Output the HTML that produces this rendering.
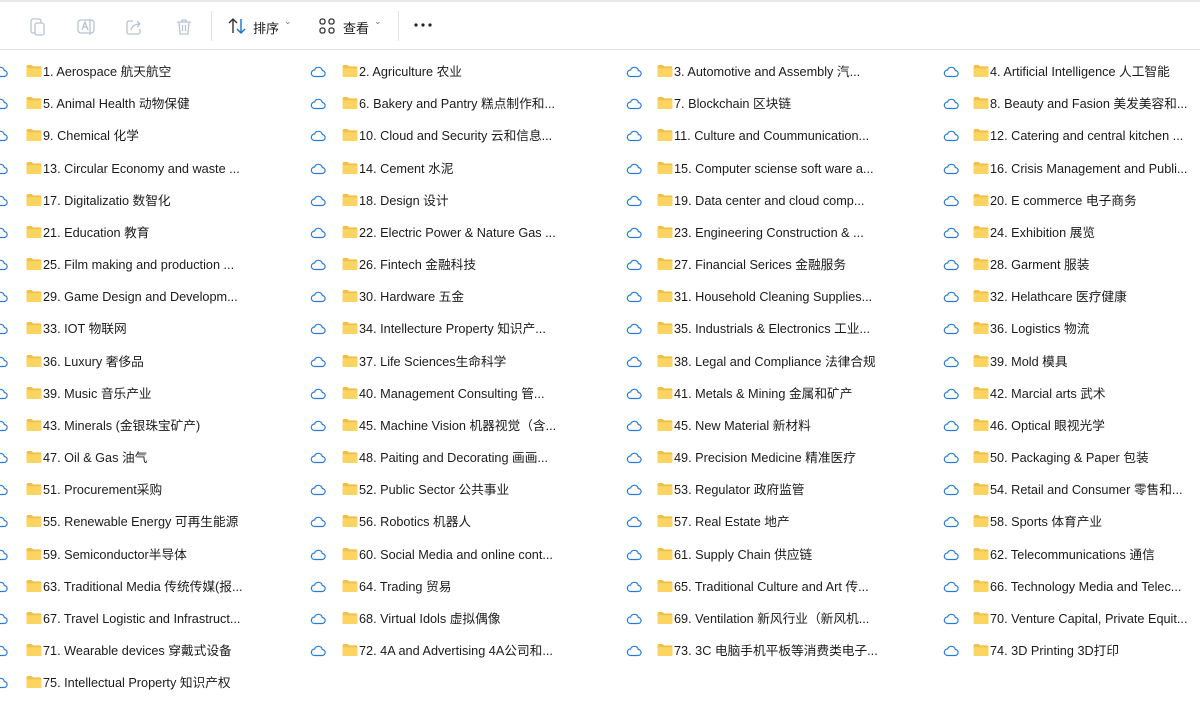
<!DOCTYPE html>
<html><head><meta charset="utf-8"><style>
body{margin:0;width:1200px;height:702px;background:#fff;overflow:hidden;position:relative;font-family:"Liberation Sans","Noto Sans CJK SC",sans-serif;color:#1b1b1b}
.tb{position:absolute;left:0;top:0;width:1200px;height:47px;border-top:2px solid #e8e8e8;border-bottom:1px solid #e0e0e0;background:#fff}
.ic{position:absolute}
.it{position:absolute;height:20px;font-size:12.7px;line-height:20px;white-space:nowrap}
.fo{position:absolute;width:16px;height:12px}
.cl{position:absolute}
.t{position:absolute;font-size:13px}
</style></head><body>
<div class="tb">
<svg class="ic" style="left:28px;top:14px" width="20" height="22" viewBox="0 0 20 22" fill="none" stroke="#b9c3cf" stroke-width="1.3"><rect x="3" y="3" width="10" height="14" rx="2"/><rect x="7" y="7" width="9" height="12" rx="2" fill="#fff"/></svg>
<svg class="ic" style="left:76px;top:15px" width="20" height="20" viewBox="0 0 20 20" fill="none" stroke="#b9c3cf" stroke-width="1.3"><rect x="2" y="3" width="16" height="13" rx="3"/><path d="M6 13l3-8 3 8M7 10h4M14 2v16"/></svg>
<svg class="ic" style="left:124px;top:15px" width="20" height="20" viewBox="0 0 20 20" fill="none" stroke="#b9c3cf" stroke-width="1.3"><path d="M9 4H5a2 2 0 0 0-2 2v9a2 2 0 0 0 2 2h9a2 2 0 0 0 2-2v-3"/><path d="M7 13c1-4 4-6 9-6M13 4l3 3-3 3"/></svg>
<svg class="ic" style="left:174px;top:15px" width="20" height="20" viewBox="0 0 20 20" fill="none" stroke="#b9c3cf" stroke-width="1.3"><path d="M3 5h14M8 5V3h4v2M5 5l1 12h8l1-12M8.5 8v6M11.5 8v6"/></svg>
<div style="position:absolute;left:211px;top:9px;width:1px;height:30px;background:#e3e3e3"></div>
<svg class="ic" style="left:227px;top:15px" width="20" height="18" viewBox="0 0 20 18" fill="none" stroke-width="1.4"><path d="M6 16V2M2 6l4-4 4 4" stroke="#333"/><path d="M14 2v14M10 12l4 4 4-4" stroke="#1a73c8"/></svg>
<div class="t" style="left:253px;top:16px">排序</div>
<div class="t" style="left:284px;top:14px;font-size:9px;color:#777">⌄</div>
<svg class="ic" style="left:319px;top:16px" width="16" height="16" viewBox="0 0 16 16" fill="none" stroke="#333" stroke-width="1.3"><rect x="1" y="1" width="5" height="5" rx="2"/><rect x="10" y="1" width="5" height="5" rx="2"/><rect x="1" y="10" width="5" height="5" rx="2"/><rect x="10" y="10" width="5" height="5" rx="2"/></svg>
<div class="t" style="left:343px;top:16px">查看</div>
<div class="t" style="left:374px;top:14px;font-size:9px;color:#777">⌄</div>
<div style="position:absolute;left:398px;top:9px;width:1px;height:30px;background:#e3e3e3"></div>
<svg class="ic" style="left:414px;top:21px" width="18" height="4" viewBox="0 0 18 4" fill="#222"><circle cx="2" cy="2" r="1.6"/><circle cx="9" cy="2" r="1.6"/><circle cx="16" cy="2" r="1.6"/></svg>
</div>
<div id="list"></div>
<script>
const items=["1. Aerospace 航天航空","2. Agriculture 农业","3. Automotive and Assembly 汽...","4. Artificial Intelligence 人工智能",
"5. Animal Health 动物保健","6. Bakery and Pantry 糕点制作和...","7. Blockchain 区块链","8. Beauty and Fasion 美发美容和...",
"9. Chemical 化学","10. Cloud and Security 云和信息...","11. Culture and Coummunication...","12. Catering and central kitchen ...",
"13. Circular Economy and waste ...","14. Cement 水泥","15. Computer sciense soft ware a...","16. Crisis Management and Publi...",
"17. Digitalizatio 数智化","18. Design 设计","19. Data center and cloud comp...","20. E commerce 电子商务",
"21. Education 教育","22. Electric Power & Nature Gas ...","23. Engineering Construction & ...","24. Exhibition 展览",
"25. Film making and production ...","26. Fintech 金融科技","27. Financial Serices 金融服务","28. Garment 服装",
"29. Game Design and Developm...","30. Hardware 五金","31. Household Cleaning Supplies...","32. Helathcare 医疗健康",
"33. IOT 物联网","34. Intellecture Property  知识产...","35. Industrials & Electronics 工业...","36. Logistics 物流",
"36. Luxury 奢侈品","37. Life Sciences生命科学","38. Legal and Compliance 法律合规","39. Mold 模具",
"39. Music 音乐产业","40. Management Consulting 管...","41. Metals & Mining 金属和矿产","42. Marcial arts 武术",
"43. Minerals (金银珠宝矿产)","45. Machine Vision 机器视觉（含...","45. New Material 新材料","46. Optical 眼视光学",
"47. Oil & Gas 油气","48. Paiting and Decorating 画画...","49. Precision Medicine 精准医疗","50. Packaging & Paper 包装",
"51. Procurement采购","52. Public Sector 公共事业","53. Regulator 政府监管","54. Retail  and Consumer 零售和...",
"55. Renewable Energy 可再生能源","56. Robotics 机器人","57. Real Estate 地产","58. Sports 体育产业",
"59. Semiconductor半导体","60. Social Media and online cont...","61. Supply Chain 供应链","62. Telecommunications 通信",
"63. Traditional Media 传统传媒(报...","64. Trading 贸易","65. Traditional Culture and Art 传...","66. Technology Media and Telec...",
"67. Travel Logistic and Infrastruct...","68. Virtual Idols 虚拟偶像","69. Ventilation 新风行业（新风机...","70. Venture Capital, Private Equit...",
"71. Wearable devices 穿戴式设备","72. 4A and Advertising 4A公司和...","73. 3C 电脑手机平板等消费类电子...","74. 3D Printing 3D打印",
"75. Intellectual Property 知识产权"];
const cx=[-8,310,626,943],fx=[26,342,657,973];
let h="";
items.forEach((s,i)=>{const c=i%4,r=Math.floor(i/4);const y=72+r*32.17;
h+=`<svg class="cl" style="left:${cx[c]}px;top:${y-6}px" width="16" height="12" viewBox="0 0 16 12"><path d="M4.5 10.5h7.5a3 3 0 0 0 .3-6A4 4 0 0 0 4.6 4a3.2 3.2 0 0 0-.1 6.5z" fill="none" stroke="#2b7cd3" stroke-width="1.2"/></svg>`;
h+=`<svg class="fo" style="left:${fx[c]}px;top:${y-7}px" viewBox="0 0 16 13"><path d="M0 1.5A1.5 1.5 0 0 1 1.5 0h4l1.5 1.5h7.5A1.5 1.5 0 0 1 16 3v8.5A1.5 1.5 0 0 1 14.5 13h-13A1.5 1.5 0 0 1 0 11.5z" fill="#f0c04a"/><path d="M0 3.5h16v8A1.5 1.5 0 0 1 14.5 13h-13A1.5 1.5 0 0 1 0 11.5z" fill="#fcd462"/></svg>`;
h+=`<div class="it" style="left:${fx[c]+17}px;top:${y-10}px">${s}</div>`;});
document.getElementById("list").innerHTML=h;
</script>
</body></html>
